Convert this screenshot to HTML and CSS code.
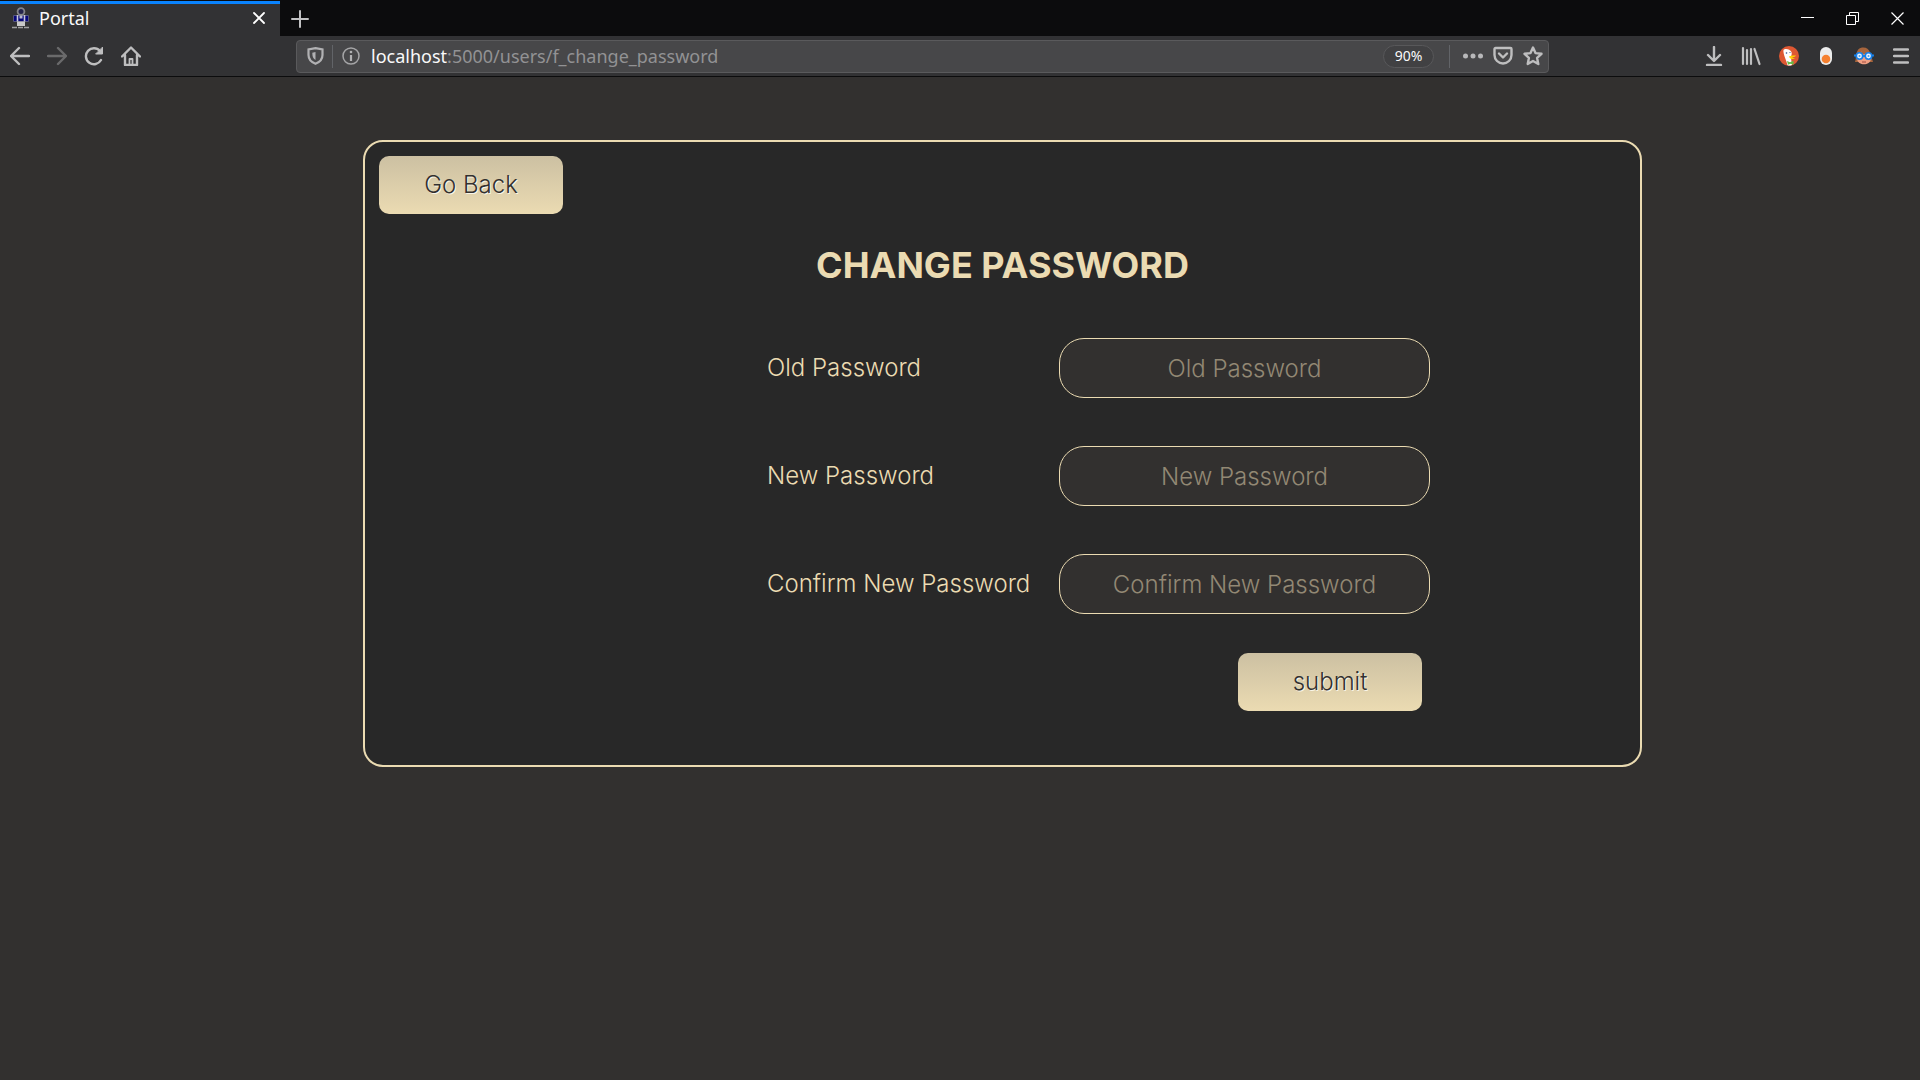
FILE: index.html
```html
<!DOCTYPE html>
<html lang="en">
<head>
<meta charset="utf-8">
<title>Portal</title>
<link rel="stylesheet" href="styles.css">
</head>
<body>
<header class="browser">
  <div class="tabs">
    <div class="tab">
      <svg class="favicon" width="20" height="22" viewBox="0 0 20 22"><path d="M2.500 8.500h15v6h-15z" fill="#07077a" stroke="#55557c"/><circle cx="10" cy="4.500" r="3.400" fill="#24244c" stroke="#85858a" stroke-width="1.800"/><path d="M6.500 8v6.500M13.500 8v6.500" stroke="#c8c8dc" stroke-width="1.600"/><path d="M8.500 8.500h3v3h-3z" fill="#b8b8d0"/><path d="M6 14.500h8V19H6z" fill="#c8c8c8"/><path d="M1 20.500h18" stroke="#a0a0a0" stroke-width="1.400" stroke-dasharray="5 1"/></svg>
      <span class="tab-title">Portal</span>
      <button class="tab-close" aria-label="Close tab"><svg width="12" height="12" viewBox="0 0 12 12"><path d="M1 1l10 10M11 1L1 11" stroke="#fff" stroke-width="1.8" stroke-linecap="round"/></svg></button>
    </div>
    <button class="new-tab" aria-label="New tab"><svg width="18" height="18" viewBox="0 0 18 18"><path d="M9 1v16M1 9h16" stroke="#c3c3c4" stroke-width="2" stroke-linecap="round"/></svg></button>
    <div class="window-controls">
      <button aria-label="Minimize"><svg width="13" height="13" viewBox="0 0 13 13"><path d="M0 5.5h13" stroke="#fff"/></svg></button>
      <button aria-label="Restore"><svg width="13" height="13" viewBox="0 0 13 13" fill="none" stroke="#fff"><path d="M.5 3.500h9v9h-9zM3.500 3.500v-3h9v9h-3"/></svg></button>
      <button aria-label="Close"><svg width="13" height="13" viewBox="0 0 13 13"><path d="M.5.5l12 12M12.500.5l-12 12" stroke="#fff" stroke-width="1.200"/></svg></button>
    </div>
  </div>
  <nav class="toolbar">
    <div class="nav-buttons">
      <button aria-label="Back"><svg width="20" height="20" viewBox="0 0 20 20" class="line"><path d="M19 10H1.500M9 2l-8 8 8 8"/></svg></button>
      <button class="dim" aria-label="Forward"><svg width="20" height="20" viewBox="0 0 20 20" class="line"><path d="M1 10h17.500M11 2l8 8-8 8"/></svg></button>
      <button aria-label="Reload"><svg width="20" height="20" viewBox="0 0 20 20" class="line"><path d="M16 5A8 8 0 1 0 17 14"/><path d="M18.500 1.500v6.500H12z" fill="#bebebf" stroke="#bebebf" stroke-width="1"/></svg></button>
      <button aria-label="Home"><svg width="20" height="20" viewBox="0 0 20 20" class="line"><path d="M1 10.500L10 1.500l9 9M4 9v10h12V9"/><path d="M8.500 18v-5h3v5" stroke-width="1.800"/></svg></button>
    </div>
    <div class="url-bar">
      <button class="shield" aria-label="Tracking protection"><svg width="17" height="18" viewBox="0 0 17 18" fill="none" stroke="#b1b1b3" stroke-width="2.200"><path d="M8.500 1.200L15.500 2.500v5.500c0 4-2.500 7-7 8.800C4 15 1.500 12 1.500 8V2.500z"/><path d="M8.500 5v8C6 11.500 5.300 9.500 5.300 5.700z" fill="#b1b1b3" stroke="none"/></svg></button>
      <span class="divider"></span>
      <button class="info" aria-label="Site information"><svg width="18" height="18" viewBox="0 0 18 18"><circle cx="9" cy="9" r="8" fill="none" stroke="#a5a5a7" stroke-width="1.500"/><circle cx="9" cy="5" r="1.300" fill="#b1b1b3"/><path d="M9 8v6" stroke="#b1b1b3" stroke-width="2.200"/></svg></button>
      <div class="address"><span class="host">localhost</span>:5000/users/f_change_password</div>
      <button class="zoom-level">90%</button>
      <span class="divider"></span>
      <div class="page-actions">
        <button aria-label="Page actions"><svg width="22" height="20" viewBox="0 0 22 20" fill="#b8b8ba"><circle cx="3.500" cy="10" r="2.500"/><circle cx="11" cy="10" r="2.500"/><circle cx="18.500" cy="10" r="2.500"/></svg></button>
        <button aria-label="Save to Pocket"><svg width="20" height="20" viewBox="0 0 20 20" class="line"><path d="M2.500 2h15a1 1 0 0 1 1 1v6a8.500 8.500 0 0 1-17 0V3a1 1 0 0 1 1-1zM6 7.500l4 4 4-4"/></svg></button>
        <button aria-label="Bookmark"><svg width="20" height="20" viewBox="0 0 20 20" class="line"><path d="M10 1.500l2.500 5.600 6 .7-4.400 4.100 1.200 6.100-5.300-3-5.300 3 1.200-6.100-4.400-4.100 6-.7z"/></svg></button>
      </div>
    </div>
    <div class="extensions">
      <button aria-label="Downloads"><svg width="18" height="20" viewBox="0 0 18 20" class="line"><path d="M9 1v13M3 9l6 6 6-6M2 19h14"/></svg></button>
      <button aria-label="Library"><svg width="20" height="20" viewBox="0 0 20 20" class="line"><path d="M2 2v16M6 4v14M10 3v15M13.500 3l5 15" stroke-width="2.200"/></svg></button>
      <button aria-label="DuckDuckGo"><svg width="20" height="20" viewBox="0 0 20 20"><circle cx="10" cy="10" r="10" fill="#de5833"/><path d="M4.500 4C6 2 11 3 12.500 6c.8 2-.6 4-.5 6l1 7c-1.500.7-3 .8-4.500.3C7.500 14 3.800 8 4.500 4z" fill="#fff"/><circle cx="7.500" cy="7" r=".8" fill="#2d4f8e"/><circle cx="11" cy="6.500" r=".6" fill="#2d4f8e"/><path d="M10 10.500c2-1.200 5-1.200 7-1-1 1.500-3 1.500-4 2 1 .5 2 .6 3 .5-1.500 1.600-5 1.500-6-1.500z" fill="#fdd20a"/><path d="M8 15l3 1.200 3.500-1.500v4l-3-1-2.500 1z" fill="#65bc46"/></svg></button>
      <button aria-label="Extension toggle"><svg width="12" height="18" viewBox="0 0 12 18"><rect width="12" height="18" rx="6" fill="#ececec"/><circle cx="6" cy="12" r="4.300" fill="#f58030"/></svg></button>
      <button aria-label="Privacy extension"><svg width="20" height="20" viewBox="0 0 20 20"><path d="M1 16C3 10 1 3 8 1.500c8-1 9 7 11 14.500z" fill="#a7653d"/><path d="M3 8l6-3 8 3v5c-1 7-13 7-14 0z" fill="#efa083"/><path d="M2 8.500Q8 7.500 9 3q3 4 9 5" fill="#a7653d"/><circle cx="5.500" cy="10" r="3.200" fill="#eaf4ff" stroke="#1780e8" stroke-width="1.600"/><circle cx="14.500" cy="10" r="3.200" fill="#eaf4ff" stroke="#1780e8" stroke-width="1.600"/><circle cx="5.500" cy="10" r="1" fill="#4c9cea"/><circle cx="14.500" cy="10" r="1" fill="#4c9cea"/><path d="M8.500 10h3M0 9.500h2M18 9.500h2" stroke="#1780e8" stroke-width="1.800"/><path d="M8 16h4" stroke="#a44c42"/></svg></button>
      <button aria-label="Menu"><svg width="16" height="20" viewBox="0 0 16 20" class="line"><path d="M1 3.500h14M1 10h14M1 16.500h14"/></svg></button>
    </div>
  </nav>
</header>
<main class="page">
  <section class="card">
    <button class="action" type="button">Go Back</button>
    <h1>CHANGE PASSWORD</h1>
    <form class="password-form">
      <label for="old">Old Password</label>
      <input id="old" type="password" placeholder="Old Password">
      <label for="new">New Password</label>
      <input id="new" type="password" placeholder="New Password">
      <label for="confirm">Confirm New Password</label>
      <input id="confirm" type="password" placeholder="Confirm New Password">
      <button class="action submit" type="submit">submit</button>
    </form>
  </section>
</main>
</body>
</html>
```
FILE: styles.css
```css
* { box-sizing: border-box; }
body {
  margin: 0;
  min-height: 100vh;
  background: #32302f;
  font-family: "Inter", "Open Sans", sans-serif;
}
button { font: inherit; border: 0; padding: 0; background: none; cursor: pointer; }
svg { display: block; flex: none; }
.line { fill: none; stroke: #bebebf; stroke-width: 2.4; stroke-linecap: round; stroke-linejoin: round; }

.browser { font-family: "Noto Sans", sans-serif; border-bottom: 1px solid #0c0c0d; }
.tabs { display: flex; height: 36px; background: #0c0c0d; padding-top: 1px; }
.tab {
  display: flex;
  align-items: center;
  width: 280px;
  padding: 0 15px 4px 11px;
  border-top: 3px solid #0a84ff;
  background: #323234;
  color: #f9f9fa;
}
.tab-title { flex: 1; margin-left: 8px; font-size: 18px; line-height: 24px; }
.new-tab { display: grid; place-items: center; width: 40px; }
.window-controls { display: flex; margin-left: auto; }
.window-controls button { display: grid; place-items: center; width: 45px; }

.toolbar { display: flex; align-items: center; height: 40px; background: #323234; }
.nav-buttons { display: flex; width: 296px; padding-left: 1px; }
.nav-buttons button, .extensions button { display: grid; place-items: center; width: 37px; height: 36px; }
.dim { opacity: .4; }
.extensions { display: flex; justify-content: space-between; width: 225px; margin-left: 146px; }
.url-bar {
  display: flex;
  align-items: center;
  flex: 1;
  height: 33px;
  padding: 0 0 0 10px;
  border: 1px solid #5a5a5c;
  border-radius: 4px;
  background: #474749;
}
.divider { width: 1px; height: 23px; background: #626468; }
.shield { margin-right: 8px; }
.info { margin: 0 11px 0 9px; }
.address { flex: 1; font-size: 18px; line-height: 24px; color: #929294; }
.host { color: #f9f9fa; }
.zoom-level {
  width: 51px;
  height: 23px;
  margin-right: 15px;
  border: 1px solid #58585a;
  border-radius: 12px;
  background: #414143;
  color: #f9f9fa;
  font-size: 14px;
  line-height: 20px;
}
.page-actions { display: flex; margin-left: 8px; }
.page-actions button { display: grid; place-items: center; width: 30px; }

.page { padding: 63px 278px 63px 363px; }
.card {
  padding: 14px 14px 54px;
  border: 2px solid #ebdbb2;
  border-radius: 20px;
  background: #282828;
  color: #ebdbb2;
}
.action {
  width: 184px;
  height: 58px;
  border-radius: 10px;
  background: linear-gradient(#ccc0a2, #ebdbb2);
  color: #32302f;
  font-size: 24px;
  font-weight: 300;
  line-height: 32px;
  text-shadow: 1px 1px 0 #f9f5e8;
}
h1 {
  margin: 29px 0 50px;
  font-size: 36px;
  font-weight: 700;
  line-height: 45px;
  text-align: center;
}
.password-form {
  display: grid;
  grid-template-columns: 292px 371px;
  align-items: center;
  justify-content: end;
  row-gap: 48px;
  padding-right: 196px;
}
.password-form label { font-size: 24px; font-weight: 300; line-height: 32px; }
.password-form input {
  width: 100%;
  height: 60px;
  border: 1px solid #ebdbb2;
  border-radius: 25px;
  background: #32302f;
  color: #ebdbb2;
  font-family: inherit;
  font-size: 24px;
  font-weight: 300;
  text-align: center;
}
.password-form input::placeholder { color: #928874; opacity: 1; }
.submit { grid-column: 2; justify-self: end; margin: -9px 8px 0 0; }
```
